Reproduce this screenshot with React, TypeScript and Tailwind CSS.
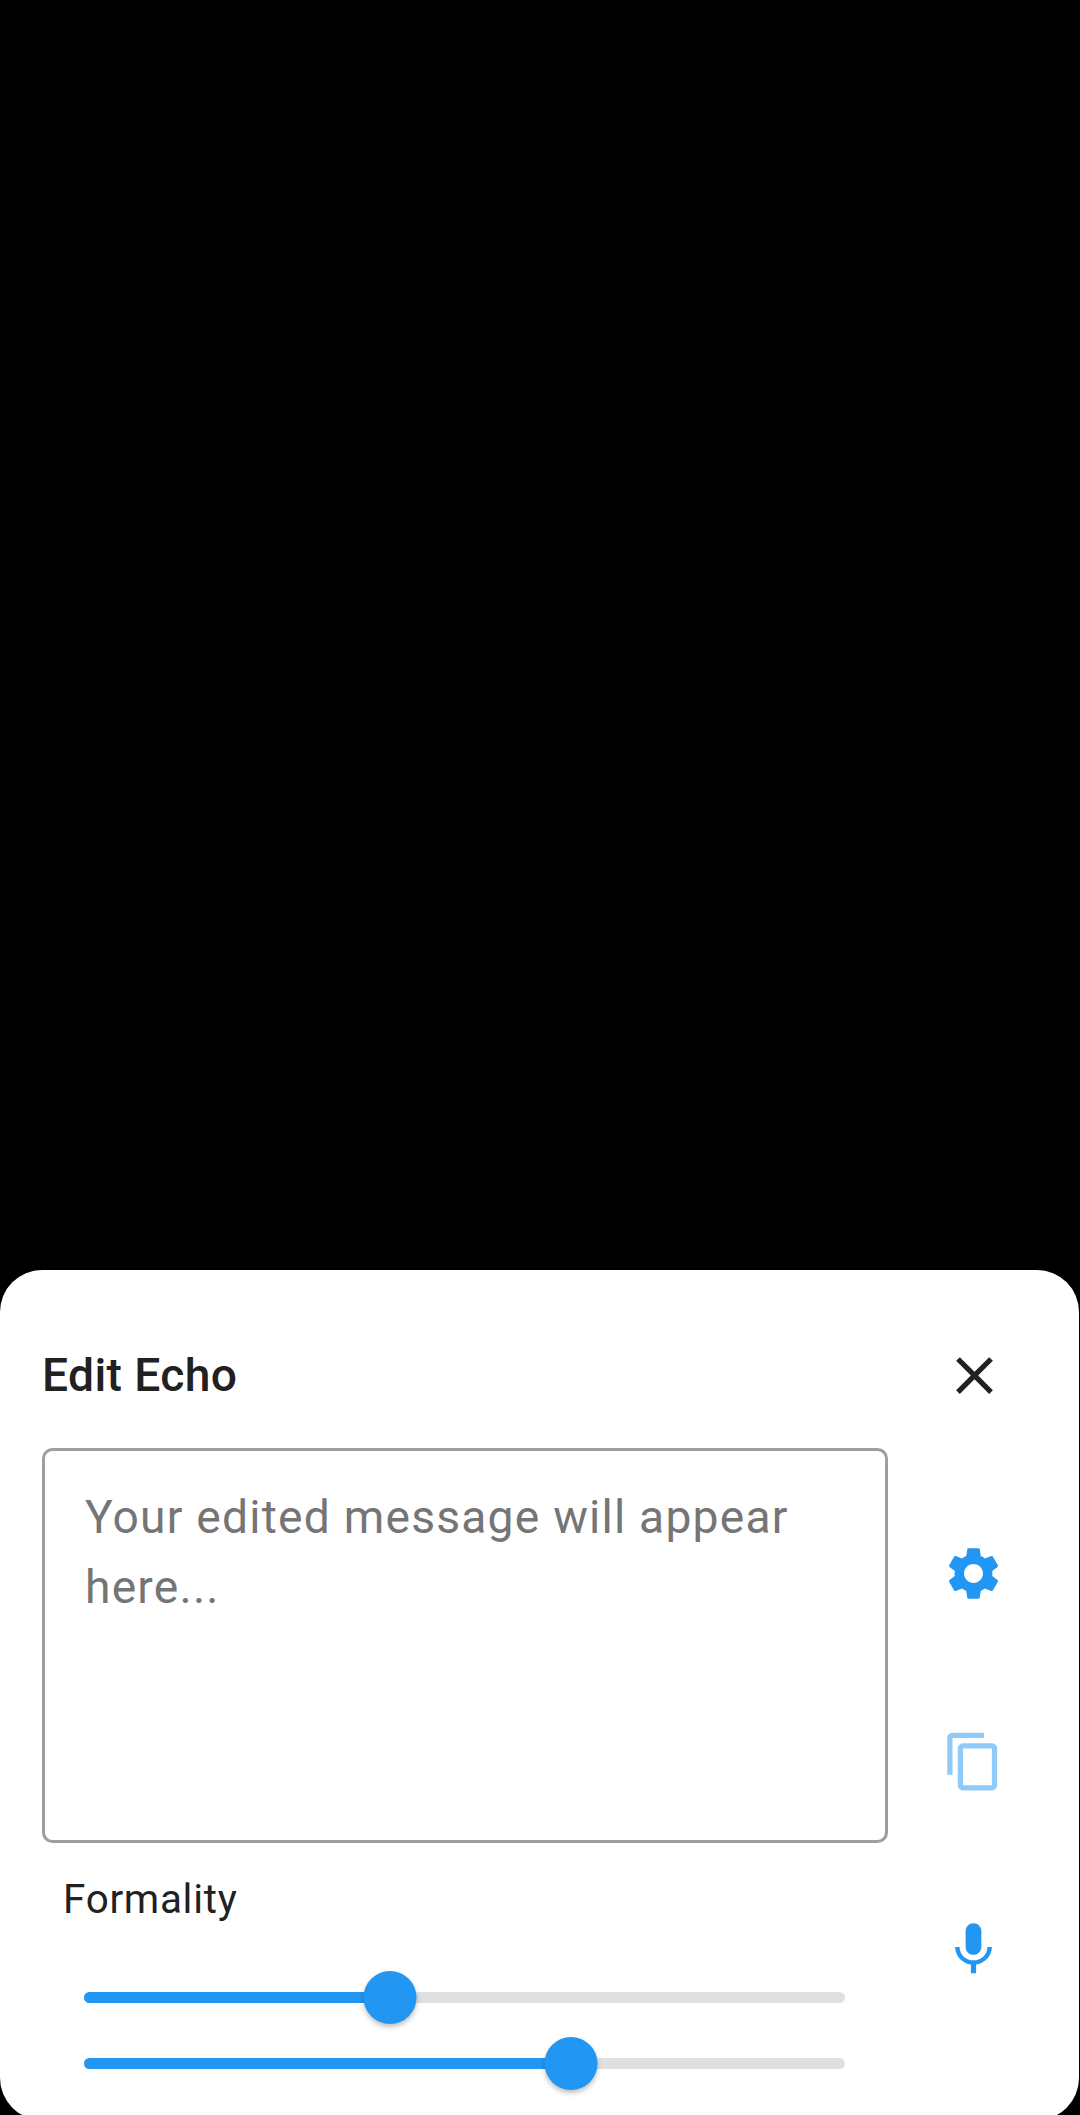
import React from "react";

type IconProps = { path: string; className: string };

function Icon({ path, className }: IconProps) {
  return (
    <svg viewBox="0 0 24 24" fill="currentColor" className={`block size-[63px] ${className}`}>
      <path d={path} />
    </svg>
  );
}

const CLOSE =
  "M19 6.41L17.59 5 12 10.59 6.41 5 5 6.41 10.59 12 5 17.59 6.41 19 12 13.41 17.59 19 19 17.59 13.41 12z";
const SETTINGS =
  "M19.14 12.94c.04-.3.06-.61.06-.94 0-.32-.02-.64-.07-.94l2.03-1.58c.18-.14.23-.41.12-.61l-1.92-3.32c-.12-.22-.37-.29-.59-.22l-2.39.96c-.5-.38-1.03-.7-1.62-.94l-.36-2.54c-.04-.24-.24-.41-.48-.41h-3.84c-.24 0-.43.17-.47.41l-.36 2.54c-.59.24-1.13.57-1.62.94l-2.39-.96c-.22-.08-.47 0-.59.22L2.74 8.87c-.12.21-.08.47.12.61l2.03 1.58c-.05.3-.09.63-.09.94s.02.64.07.94l-2.03 1.58c-.18.14-.23.41-.12.61l1.92 3.32c.12.22.37.29.59.22l2.39-.96c.5.38 1.03.7 1.62.94l.36 2.54c.05.24.24.41.48.41h3.84c.24 0 .44-.17.47-.41l.36-2.54c.59-.24 1.13-.56 1.62-.94l2.39.96c.22.08.47 0 .59-.22l1.92-3.32c.12-.22.07-.47-.12-.61l-2.01-1.58zM12 15.6c-1.98 0-3.6-1.62-3.6-3.6s1.62-3.6 3.6-3.6 3.6 1.62 3.6 3.6-1.62 3.6-3.6 3.6z";
const COPY =
  "M16 1H4c-1.1 0-2 .9-2 2v14h2V3h12V1zm3 4H8c-1.1 0-2 .9-2 2v14c0 1.1.9 2 2 2h11c1.1 0 2-.9 2-2V7c0-1.1-.9-2-2-2zm0 16H8V7h11v14z";
const MIC =
  "M12 14c1.66 0 2.99-1.34 2.99-3L15 5c0-1.66-1.34-3-3-3S9 3.34 9 5v6c0 1.66 1.34 3 3 3zm5.3-3c0 3-2.54 5.1-5.3 5.1S6.7 14 6.7 11H5c0 3.41 2.72 6.23 6 6.72V21h2v-3.28c3.28-.48 6-3.3 6-6.72h-1.7z";

function Slider({ value }: { value: number }) {
  return (
    <div className="relative flex h-[66px] w-[761px] items-center">
      <div className="h-[11px] w-full overflow-hidden rounded-full bg-[#e0e0e0]">
        <div className="h-full bg-[#2196f3]" style={{ width: value }} />
      </div>
      <div
        className="absolute size-[53px] -translate-x-1/2 rounded-full bg-[#2196f3] shadow-[0_3px_5px_rgba(0,0,0,0.25)]"
        style={{ left: value }}
      />
    </div>
  );
}

export default function App() {
  return (
    <div className="flex h-[2115px] w-[1080px] flex-col overflow-hidden bg-black pt-[1270px] font-[Roboto,sans-serif]">
      <section className="h-[850px] w-[1079px] shrink-0 rounded-[42px] bg-white pl-[42px]">
        <header className="flex h-[178px] items-start justify-between pr-[73px] pt-[74px]">
          <h1 className="text-[46.2px] font-medium leading-[63px] tracking-[0.38px] text-[#212121]">Edit Echo</h1>
          <button aria-label="Close">
            <Icon path={CLOSE} className="text-[#212121]" />
          </button>
        </header>
        <div className="flex">
          <div className="w-[846px]">
            <div className="h-[395px] w-full rounded-[10.5px] border-[3px] border-[#9e9e9e] pl-[40px] pt-[31px] text-[46.2px] leading-[70px] tracking-[1.22px] text-[#757575]">
              Your edited message will appear
              <br />
              here...
            </div>
            <div className="pl-[21px] pt-[30px] text-[40.4px] leading-[54px] tracking-[0.72px] text-[#212121]">
              Formality
            </div>
            <div className="pl-[42px] pt-[37.5px]">
              <Slider value={305.5} />
              <Slider value={486.5} />
            </div>
          </div>
          <div className="flex flex-col gap-[125px] pl-[54px] pt-[94px]">
            <Icon path={SETTINGS} className="text-[#2196f3]" />
            <Icon path={COPY} className="text-[#90caf9]" />
            <Icon path={MIC} className="text-[#2196f3]" />
          </div>
        </div>
      </section>
    </div>
  );
}
